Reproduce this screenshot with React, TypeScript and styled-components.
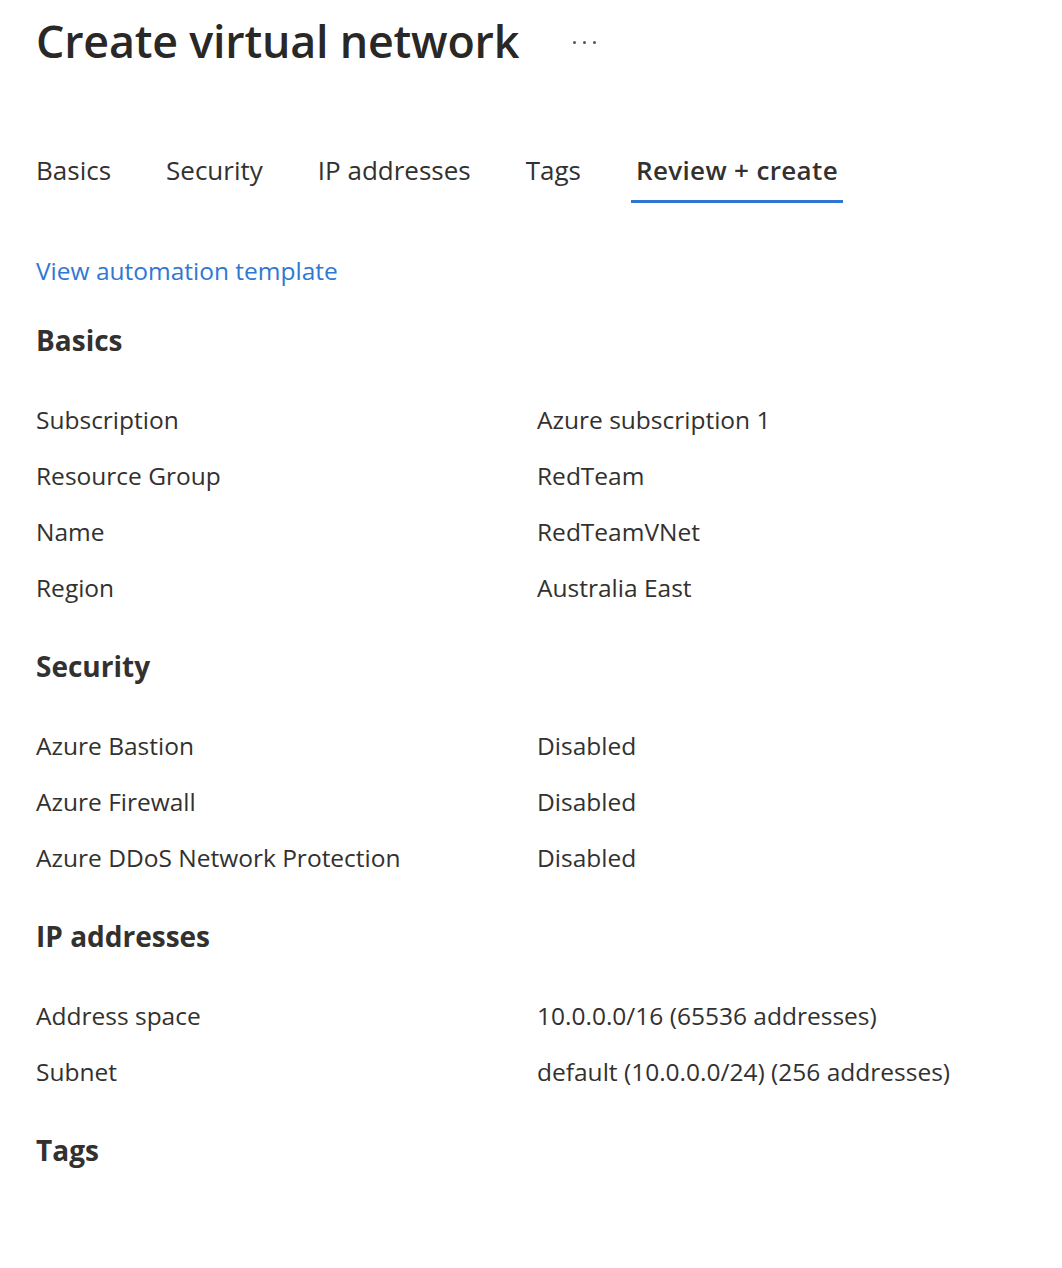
import React from "react";
import styled, { createGlobalStyle } from "styled-components";

const GlobalStyle = createGlobalStyle`
  html, body { margin: 0; padding: 0; background: #ffffff; }
  body { font-family: "Segoe UI", "Open Sans", "Noto Sans", sans-serif; color: #323130; }
`;

const Page = styled.div`
  padding: 0 0 80px 36px;
  width: 1062px;
  box-sizing: border-box;
`;

const TitleBar = styled.div`
  display: flex;
  align-items: center;
  height: 84px;
`;

const Title = styled.h1`
  margin: 0 0 4px;
  font-size: 44.8px;
  font-weight: 600;
  color: #292827;
  letter-spacing: -0.2px;
`;

const MoreButton = styled.div`
  display: flex;
  gap: 7px;
  margin-left: 54px;
`;

const Dot = styled.span`
  width: 3px;
  height: 3px;
  border-radius: 50%;
  background: #555;
`;

const Tabs = styled.nav`
  display: flex;
  gap: 45px;
  margin-top: 56px;
  margin-left: -5px;
`;

const Tab = styled.div<{ $active?: boolean }>`
  padding: 0 5px;
  height: 63px;
  display: flex;
  align-items: center;
  box-sizing: border-box;
  font-size: 26px;
  font-weight: ${(p) => (p.$active ? 600 : 400)};
  letter-spacing: ${(p) => (p.$active ? "0.35px" : "0")};
  color: #323130;
  border-bottom: 3px solid ${(p) => (p.$active ? "#2f76d2" : "transparent")};
`;

const Link = styled.a`
  display: block;
  margin-top: 52px;
  height: 32px;
  line-height: 32px;
  font-size: 24.5px;
  color: #2e78d4;
  text-decoration: none;
`;

const SectionHeading = styled.h2`
  margin: 0;
  padding: 34px 0;
  line-height: 34px;
  font-size: 28px;
  font-weight: 700;
  color: #323130;
`;

const FirstHeading = styled(SectionHeading)`
  margin-top: 2px;
`;

const Row = styled.div`
  display: grid;
  grid-template-columns: 501px 1fr;
  height: 56px;
  align-items: center;
  font-size: 24.5px;
  color: #323130;
`;

const Cell = styled.span``;

type Item = [string, string];

const sections: { title: string; rows: Item[] }[] = [
  {
    title: "Basics",
    rows: [
      ["Subscription", "Azure subscription 1"],
      ["Resource Group", "RedTeam"],
      ["Name", "RedTeamVNet"],
      ["Region", "Australia East"],
    ],
  },
  {
    title: "Security",
    rows: [
      ["Azure Bastion", "Disabled"],
      ["Azure Firewall", "Disabled"],
      ["Azure DDoS Network Protection", "Disabled"],
    ],
  },
  {
    title: "IP addresses",
    rows: [
      ["Address space", "10.0.0.0/16 (65536 addresses)"],
      ["Subnet", "default (10.0.0.0/24) (256 addresses)"],
    ],
  },
  { title: "Tags", rows: [] },
];

const tabs = ["Basics", "Security", "IP addresses", "Tags", "Review + create"];

export default function App() {
  return (
    <>
      <GlobalStyle />
      <Page>
        <TitleBar>
          <Title>Create virtual network</Title>
          <MoreButton>
            <Dot />
            <Dot />
            <Dot />
          </MoreButton>
        </TitleBar>
        <Tabs>
          {tabs.map((t) => (
            <Tab key={t} $active={t === "Review + create"}>
              {t}
            </Tab>
          ))}
        </Tabs>
        <Link href="#">View automation template</Link>
        {sections.map((s, i) => {
          const H = i === 0 ? FirstHeading : SectionHeading;
          return (
            <section key={s.title}>
              <H>{s.title}</H>
              {s.rows.map(([k, v]) => (
                <Row key={k}>
                  <Cell>{k}</Cell>
                  <Cell>{v}</Cell>
                </Row>
              ))}
            </section>
          );
        })}
      </Page>
    </>
  );
}
